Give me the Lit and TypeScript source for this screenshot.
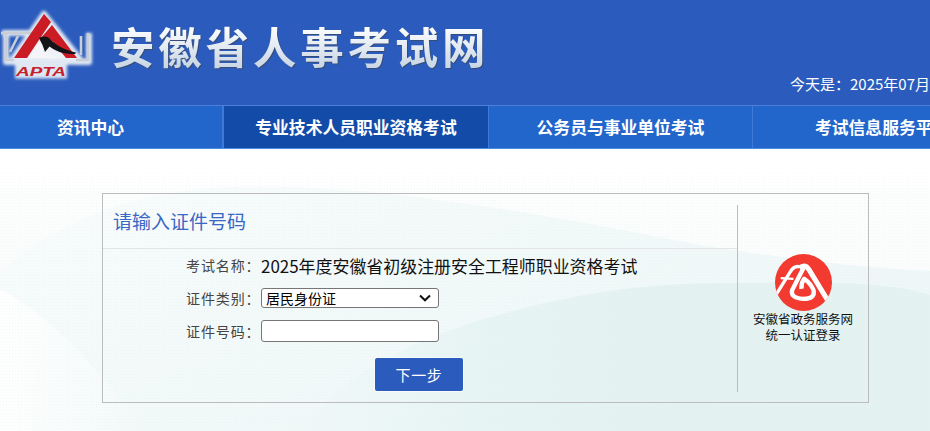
import { LitElement, html, css } from "lit";
import { customElement } from "lit/decorators.js";

@customElement("app-root")
export class AppRoot extends LitElement {
  static styles = css`
    :host { display: block; width: 930px; height: 431px; overflow: hidden; font-family: "Noto Sans CJK SC", "Noto Sans", sans-serif; background: #fff; color: #333; }
    * { box-sizing: border-box; }
    .head { height: 105px; background: #2b5cbd; display: flex; position: relative; overflow: hidden; }
    .logo { width: 100px; height: 80px; flex: none; margin-top: 5px; }
    .brand { margin: 16px 0 0 11px; font-size: 43.5px; line-height: 60px; height: 60px; letter-spacing: 3.8px; font-weight: 700; white-space: nowrap;
      background: linear-gradient(180deg, #fbfdff 20%, #c9d6e4 85%); -webkit-background-clip: text; background-clip: text; color: transparent;
      filter: drop-shadow(1px 1px 0.5px rgba(60,70,90,.7)); }
    .date { position: absolute; left: 790px; top: 73px; font-size: 15px; line-height: 22px; color: #fff; white-space: nowrap; }
    .nav { height: 44px; display: flex; background: #2266cc; border-top: 1px solid #4a80dc; border-bottom: 1px solid #4a8ae2; color: #fff; font-size: 16.8px; font-weight: 700; white-space: nowrap; overflow: hidden; }
    .nav a { display: flex; align-items: center; justify-content: center; flex: none; height: 100%; }
    .nav a:nth-child(1) { width: 224px; padding-right: 41px; border-right: 2px solid #3f7ada; }
    .nav a:nth-child(2) { width: 264px; background: #134ca8; }
    .nav a:nth-child(3) { width: 265px; border-left: 1px solid #3f7ada; border-right: 1px solid #3f7ada; }
    .nav a:nth-child(4) { width: 200px; justify-content: flex-start; padding-left: 62px; }
    .main { position: relative; height: 282px; padding: 44px 0 0 102px; }
    .bg { position: absolute; left: 0; top: 0; width: 930px; height: 282px; }
    .card { position: relative; width: 767px; height: 210px; border: 1px solid #bcbcbc; display: flex; }
    .left { width: 634px; flex: none; }
    .title { height: 55px; border-bottom: 1px solid #e2e4e6; padding-left: 10px; font-size: 19px; line-height: 54px; color: #3a66c4; }
    .form { padding: 5px 0 0 83px; display: flex; flex-direction: column; gap: 12px; }
    .row { display: flex; align-items: center; height: 20px; }
    .row.tall { height: 22px; }
    .lab { width: 75px; flex: none; font-size: 14px; letter-spacing: 0.9px; color: #444; white-space: nowrap; }
    .val { font-size: 16.95px; color: #111; white-space: nowrap; position: relative; line-height: 22px; padding-top: 2px; }
    .sel { position: relative; width: 178px; height: 20px; }
    select, input { display: block; width: 178px; margin: 0; background: #fff; border: 1px solid #767676; border-radius: 3px; font-family: inherit; color: #000; }
    select { appearance: none; -webkit-appearance: none; height: 20px; font-size: 14px; padding: 0 0 0 4px; line-height: 18px; }
    .chev { position: absolute; right: 8px; top: 6px; width: 12px; height: 8px; pointer-events: none; }
    input { height: 22px; }
    .btn { margin: 4px 0 0 189px; width: 88px; height: 33px; background: #2b5cbd; border: none; box-shadow: 0 0 0 1px rgba(255,255,255,.55); border-radius: 2px; color: #fff; font-family: inherit; font-size: 15px; letter-spacing: 0.7px; padding: 0; }
    .right { flex: 1; margin: 11px 0 10px; border-left: 1px solid #bcbcbc; display: flex; flex-direction: column; align-items: center; justify-content: center; padding-bottom: 1px; }
    .seal { width: 57px; height: 57px; display: block; }
    .cap { font-size: 12.5px; line-height: 16px; text-align: center; color: #111; white-space: nowrap; }
  `;

  bg() {
    return html`<svg class="bg" viewBox="0 0 930 282" aria-hidden="true">
      <defs>
        <pattern id="dots" width="3" height="3" patternUnits="userSpaceOnUse"><rect width="1" height="1" fill="#dfe8ee" opacity=".55"/></pattern>
        <linearGradient id="fade" x1="0" y1="0" x2="0" y2="1"><stop offset="0" stop-color="#fff"/><stop offset=".1" stop-color="#fff"/><stop offset=".16" stop-color="#fcfdfd"/><stop offset="1" stop-color="#f8fcfc"/></linearGradient>
        <linearGradient id="w1" x1="0" y1="0" x2="1" y2="0.6"><stop offset="0" stop-color="#f9fcfc"/><stop offset=".5" stop-color="#f2f9f9"/><stop offset="1" stop-color="#edf6f7"/></linearGradient>
        <linearGradient id="w2" x1="0" y1="0" x2="1" y2="0"><stop offset="0" stop-color="#e6f4f3" stop-opacity="0"/><stop offset=".3" stop-color="#e6f4f3"/><stop offset=".6" stop-color="#e3f2f1"/><stop offset="1" stop-color="#e4f2f2"/></linearGradient>
        <linearGradient id="w3" x1="0" y1="0" x2="1" y2="0"><stop offset="0" stop-color="#fff" stop-opacity=".9"/><stop offset="1" stop-color="#fff" stop-opacity="0"/></linearGradient>
      </defs>
      <rect width="930" height="282" fill="url(#fade)"/>
      <path d="M0 125 C40 85 110 50 200 40 C330 28 520 60 700 96 C800 112 880 120 930 122 V282 H0Z" fill="url(#w1)"/>
      <path d="M440 185 C520 155 620 134 720 134 C800 134 880 130 930 146 V282 H300 C340 230 400 200 440 185Z" fill="url(#w2)"/>
      <path d="M0 140 C60 170 110 240 150 282 H0Z" fill="url(#w3)"/>
      <rect y="23" width="930" height="259" fill="url(#dots)" opacity=".5"/>
    </svg>`;
  }

  logo() {
    return html`<svg class="logo" viewBox="0 5 100 80" aria-hidden="true">
      <defs><filter id="halo" x="-20%" y="-20%" width="140%" height="140%"><feGaussianBlur stdDeviation="1.6"/></filter></defs>
      <g filter="url(#halo)" fill="none" stroke="#dfe7f3" stroke-width="6" stroke-linejoin="round">
        <path d="M44 14 L80 59 L70 62 H24 L12 60Z" fill="#eef2f8"/>
        <path d="M15 71 H67" stroke-width="15"/>
        <path d="M2 33 H34 M89 33 V62 H72 M6 34 V62 H20"/>
      </g>
      <g fill="none" stroke="#c9cdd4" stroke-width="2.6">
        <path d="M1 33 H32 M6 34 V60 H14 M18 36 L10 52"/>
        <path d="M88 33 V60 H76 M81 36 V55"/>
      </g>
      <path d="M44 14 L51 22 L27 58 H14Z" fill="#cb1c26"/>
      <path d="M52 25 L77 58 H66 L52 41 L45 50 L40 39Z" fill="#cb1c26"/>
      <path d="M29 58 L40 41 L52 56 L64 58Z" fill="#f3f5f8"/>
      <path d="M39 38 C43 36 47 36 50 39 C54 44 64 50 76 52.5 L75 54 C63 54 56 51.5 49.5 46.5 L45 52 L42.5 45Z" fill="#141418"/>
      <text x="16" y="75.5" font-family="'Liberation Sans', sans-serif" font-size="12.5" font-weight="700" font-style="italic" fill="#c5202b" textLength="50" lengthAdjust="spacingAndGlyphs">APTA</text>
    </svg>`;
  }

  seal() {
    return html`<svg class="seal" viewBox="15 12 170 170" aria-hidden="true">
      <defs><clipPath id="c"><circle cx="100" cy="97" r="85"/></clipPath></defs>
      <circle cx="100" cy="97" r="85" fill="#f23a30"/>
      <g clip-path="url(#c)" fill="none" stroke="#fff" stroke-linecap="butt" stroke-linejoin="round">
        <path d="M14 140 L60 66 Q72 46 88 50" stroke-width="10"/>
        <path d="M32 84 L70 86" stroke-width="7"/>
        <path d="M88 54 Q104 40 116 58 L172 150" stroke-width="15"/>
        <path d="M100 54 L66 120 Q60 142 98 146 Q136 146 130 120 Q122 100 102 86 Q92 100 94 116" stroke-width="13"/>
      </g>
    </svg>`;
  }

  render() {
    return html`
      <div class="head">
        ${this.logo()}
        <div class="brand">安徽省人事考试网</div>
        <div class="date">今天是：2025年07月</div>
      </div>
      <nav class="nav">
        <a>资讯中心</a><a>专业技术人员职业资格考试</a><a>公务员与事业单位考试</a><a>考试信息服务平台</a>
      </nav>
      <div class="main">
        ${this.bg()}
        <div class="card">
          <div class="left">
            <div class="title">请输入证件号码</div>
            <div class="form">
              <div class="row tall"><span class="lab">考试名称：</span><span class="val">2025年度安徽省初级注册安全工程师职业资格考试</span></div>
              <div class="row"><span class="lab">证件类别：</span><div class="sel"><select><option>居民身份证</option></select><svg class="chev" viewBox="0 0 12 8" aria-hidden="true"><path d="M1 1.5 L6 6.3 L11 1.5" fill="none" stroke="#111" stroke-width="2"/></svg></div></div>
              <div class="row tall"><span class="lab">证件号码：</span><input type="text" /></div>
              <button class="btn">下一步</button>
            </div>
          </div>
          <div class="right">
            ${this.seal()}
            <div class="cap">安徽省政务服务网<br />统一认证登录</div>
          </div>
        </div>
      </div>
    `;
  }
}
